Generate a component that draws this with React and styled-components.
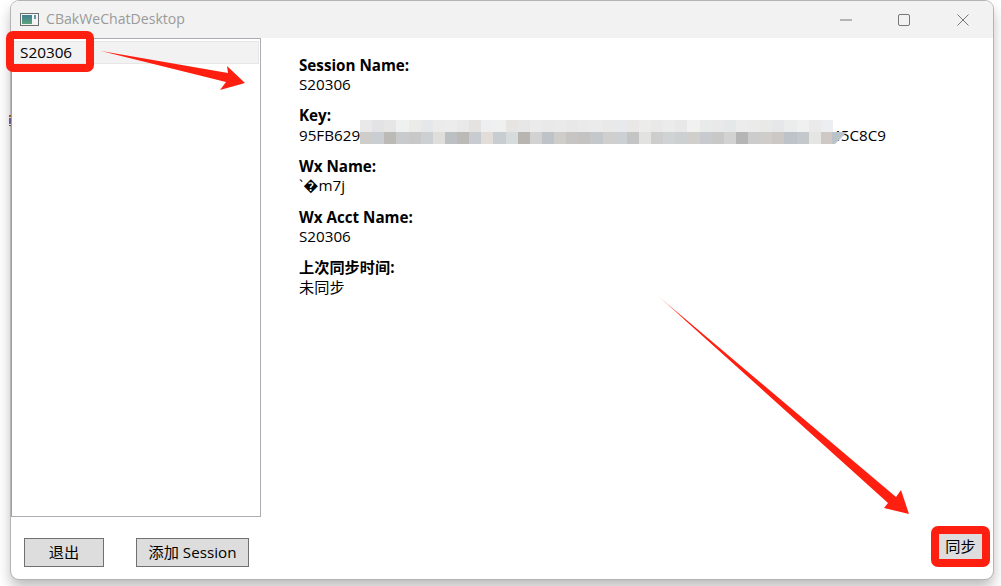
import React from 'react';
import styled, { createGlobalStyle } from 'styled-components';

const GlobalStyle = createGlobalStyle`
    html, body {
        margin: 0;
        padding: 0;
        background: #fff;
    }
    body {
        width: 1001px;
        height: 586px;
        overflow: hidden;
        font-family: "Open Sans", "Noto Sans CJK SC", sans-serif;
    }
`;

const Page = styled.div`
    position: relative;
    width: 1001px;
    height: 586px;
    padding: 1px 8px 7px 11px;
    box-sizing: border-box;
    overflow: hidden;
`;

const Window = styled.div`
    height: 100%;
    display: flex;
    flex-direction: column;
    background: #fff;
    border-radius: 8px;
    box-shadow: 0 0 0 1px #b4b4b4, 0 8px 14px rgba(0, 0, 0, .28);
    overflow: hidden;
`;

const TitleBar = styled.div`
    height: 37px;
    flex: none;
    display: flex;
    align-items: center;
    padding-left: 9px;
    background: #f2f2f2;
`;

const AppIcon = styled.svg`
    width: 19px;
    height: 13px;
    margin-right: 7px;
`;

const Title = styled.span`
    font-size: 14.1px;
    color: #9a9a9a;
    flex: 1;
    position: relative;
    top: -1px;
`;

const WindowButton = styled.svg`
    width: 12px;
    height: 12px;
    margin-right: ${p => p.$gap}px;
    fill: none;
    stroke: #777;
    stroke-width: 1;
`;

const Body = styled.div`
    flex: 1;
    display: grid;
    grid-template-columns: 250px 1fr;
    grid-template-rows: 1fr 62px;
    min-height: 0;
`;

const SessionList = styled.div`
    border: 1px solid #abadb3;
    border-left-color: #a0a0a0;
    padding: 2px 1px;
    box-sizing: border-box;
`;

const SessionItem = styled.div`
    height: 23px;
    line-height: 21px;
    padding-left: 6px;
    background: #f2f2f2;
    border: 1px solid #e6e6e6;
    box-sizing: border-box;
    font-size: 15.3px;
    color: #000;
`;

const Details = styled.div`
    padding: 17.6px 0 0 38px;
`;

const Field = styled.div`
    margin-bottom: 11.9px;
    font-size: 15.2px;
    line-height: 19.4px;
    color: #000;
    white-space: nowrap;
`;

const Label = styled.div`
    font-weight: 700;
`;

const HiddenPart = styled.span`
    display: inline-block;
    width: 472px;
`;

const LeftFooter = styled.div`
    display: flex;
    gap: 32px;
    padding: 21px 0 0 13px;
`;

const RightFooter = styled.div`
    display: flex;
    justify-content: flex-end;
    padding: 16px 10px 0 0;
`;

const Button = styled.button`
    width: ${p => p.$width}px;
    height: ${p => p.$height}px;
    padding: 0 0 4px;
    border: 1px solid #707070;
    background: #dddddd;
    font: inherit;
    font-size: 15.2px;
    color: #000;
`;

const StrayGlyph = styled.div`
    position: absolute;
    left: 9px;
    top: 115px;
    width: 2px;
    height: 11px;
    background: linear-gradient(#8a5a2a 0 15%, #e8d8b0 15% 30%, #6a5a90 30% 80%, #e8e0d0 80% 88%, #6a4a2a 88%);
`;

const Mosaic = styled.div`
    position: absolute;
    left: 360px;
    top: 120px;
    display: grid;
    grid-template-columns: repeat(39, 12.13px);
    grid-auto-rows: 12px;
`;

const Overlay = styled.svg`
    position: absolute;
    left: 0;
    top: 0;
    pointer-events: none;
`;

const RedFrame = styled.div`
    position: absolute;
    left: ${p => p.$left}px;
    top: ${p => p.$top}px;
    width: ${p => p.$width}px;
    height: ${p => p.$height}px;
    box-sizing: border-box;
    border: 8px solid #fe1f10;
    border-radius: 7px;
`;

const topRow = ['#e9e9e9', '#e3e3e5', '#e6e6e6', '#eff1f1', '#ebebe9', '#e6e7ea', '#ebebeb', '#ececec', '#e9e9ea', '#e4e3e1', '#eeeff1', '#eff0f0', '#e6e5e4', '#e7e7e7', '#ebebeb', '#e9e9e9', '#eaeaea', '#e8e8e8', '#eaeaea', '#ebebeb', '#e9e9e9', '#e7e9ec', '#e9e8e6', '#ececea', '#e9e9e9', '#ebebeb', '#e8e8e8', '#f1f1f1', '#e9eaea', '#e8e9e8', '#e5e8e8', '#ebeceb', '#ebebe9', '#e9e9e7', '#e5e7e9', '#ebecec', '#f0f0f0', '#eaeaea', '#eceef2'];
const bottomRow = ['#cfcdca', '#caced2', '#bcbab7', '#c8cacb', '#c8c8c8', '#cdd0d3', '#e0dedb', '#bdc0c3', '#bcbab7', '#c8ccd0', '#e2ddd9', '#c8cdd1', '#d6dbdc', '#b8b5b1', '#d2d2d2', '#bec3c8', '#cfcdca', '#c6c5c3', '#c4c3c1', '#c5c8ca', '#d0cfcd', '#ccd0d3', '#c4c4c4', '#e2e2e0', '#cdcdcd', '#d0d3d4', '#ccd0d0', '#d0cfcc', '#c8cacf', '#c8c8c6', '#d2d2d2', '#b5b5b5', '#cccccc', '#cfcdca', '#cbc8c6', '#bdc3c8', '#c5c8ca', '#e5e5e3', '#cec9c5'];

function App() {
    return (
        <Page>
            <GlobalStyle />
            <Window>
                <TitleBar>
                    <AppIcon viewBox="0 0 19 13">
                        <defs>
                            <linearGradient id="appIconFill" x1="0" y1="0" x2="0" y2="1">
                                <stop offset="0" stopColor="#3f7f93" />
                                <stop offset="1" stopColor="#5ea27b" />
                            </linearGradient>
                        </defs>
                        <rect x=".5" y=".5" width="18" height="12" fill="#f4f4f4" stroke="#6f6f6f" />
                        <rect x="2" y="2" width="10" height="9" fill="url(#appIconFill)" />
                        <rect x="14" y="2" width="2" height="4" fill="#5a9ab0" />
                    </AppIcon>
                    <Title>CBakWeChatDesktop</Title>
                    <WindowButton viewBox="0 0 12 12" $gap={46}>
                        <path d="M0 6H12" />
                    </WindowButton>
                    <WindowButton viewBox="0 0 12 12" $gap={47}>
                        <rect x=".5" y=".5" width="11" height="11" rx="1.5" />
                    </WindowButton>
                    <WindowButton viewBox="0 0 12 12" $gap={24}>
                        <path d="M.5 .5L11.5 11.5M11.5 .5L.5 11.5" />
                    </WindowButton>
                </TitleBar>
                <Body>
                    <SessionList>
                        <SessionItem>S20306</SessionItem>
                    </SessionList>
                    <Details>
                        <Field><Label>Session Name:</Label>S20306</Field>
                        <Field><Label>Key:</Label>95FB629<HiddenPart />45C8C9</Field>
                        <Field><Label>Wx Name:</Label>`�m7j</Field>
                        <Field><Label>Wx Acct Name:</Label>S20306</Field>
                        <Field><Label>上次同步时间:</Label>未同步</Field>
                    </Details>
                    <LeftFooter>
                        <Button $width={80} $height={29}>退出</Button>
                        <Button $width={113} $height={29}>添加 Session</Button>
                    </LeftFooter>
                    <RightFooter>
                        <Button $width={45} $height={27}>同步</Button>
                    </RightFooter>
                </Body>
            </Window>
            <StrayGlyph />
            <Mosaic>
                {topRow.concat(bottomRow).map((c, i) => (
                    <span key={i} style={{ background: c }} />
                ))}
            </Mosaic>
            <RedFrame $left={6} $top={31} $width={88} $height={41} />
            <RedFrame $left={931} $top={526} $width={59} $height={41} />
            <Overlay width="1001" height="586" viewBox="0 0 1001 586">
                <path d="M832 132L847 132L835 144L832 144Z" fill="#bcc3c8" />
                <defs>
                    <linearGradient id="tailFade" gradientUnits="userSpaceOnUse" x1="657" y1="295" x2="685" y2="319">
                        <stop offset="0" stopColor="#fe1f10" stopOpacity=".2" />
                        <stop offset="1" stopColor="#fe1f10" />
                    </linearGradient>
                </defs>
                <path d="M101 51L228 73L227 66L245 83L220 90L226 82Z" fill="#fe1f10" />
                <path d="M657 295L896 497L901 490L909 514L884 508L888 503Z" fill="url(#tailFade)" />
            </Overlay>
        </Page>
    );
}

export default App;
